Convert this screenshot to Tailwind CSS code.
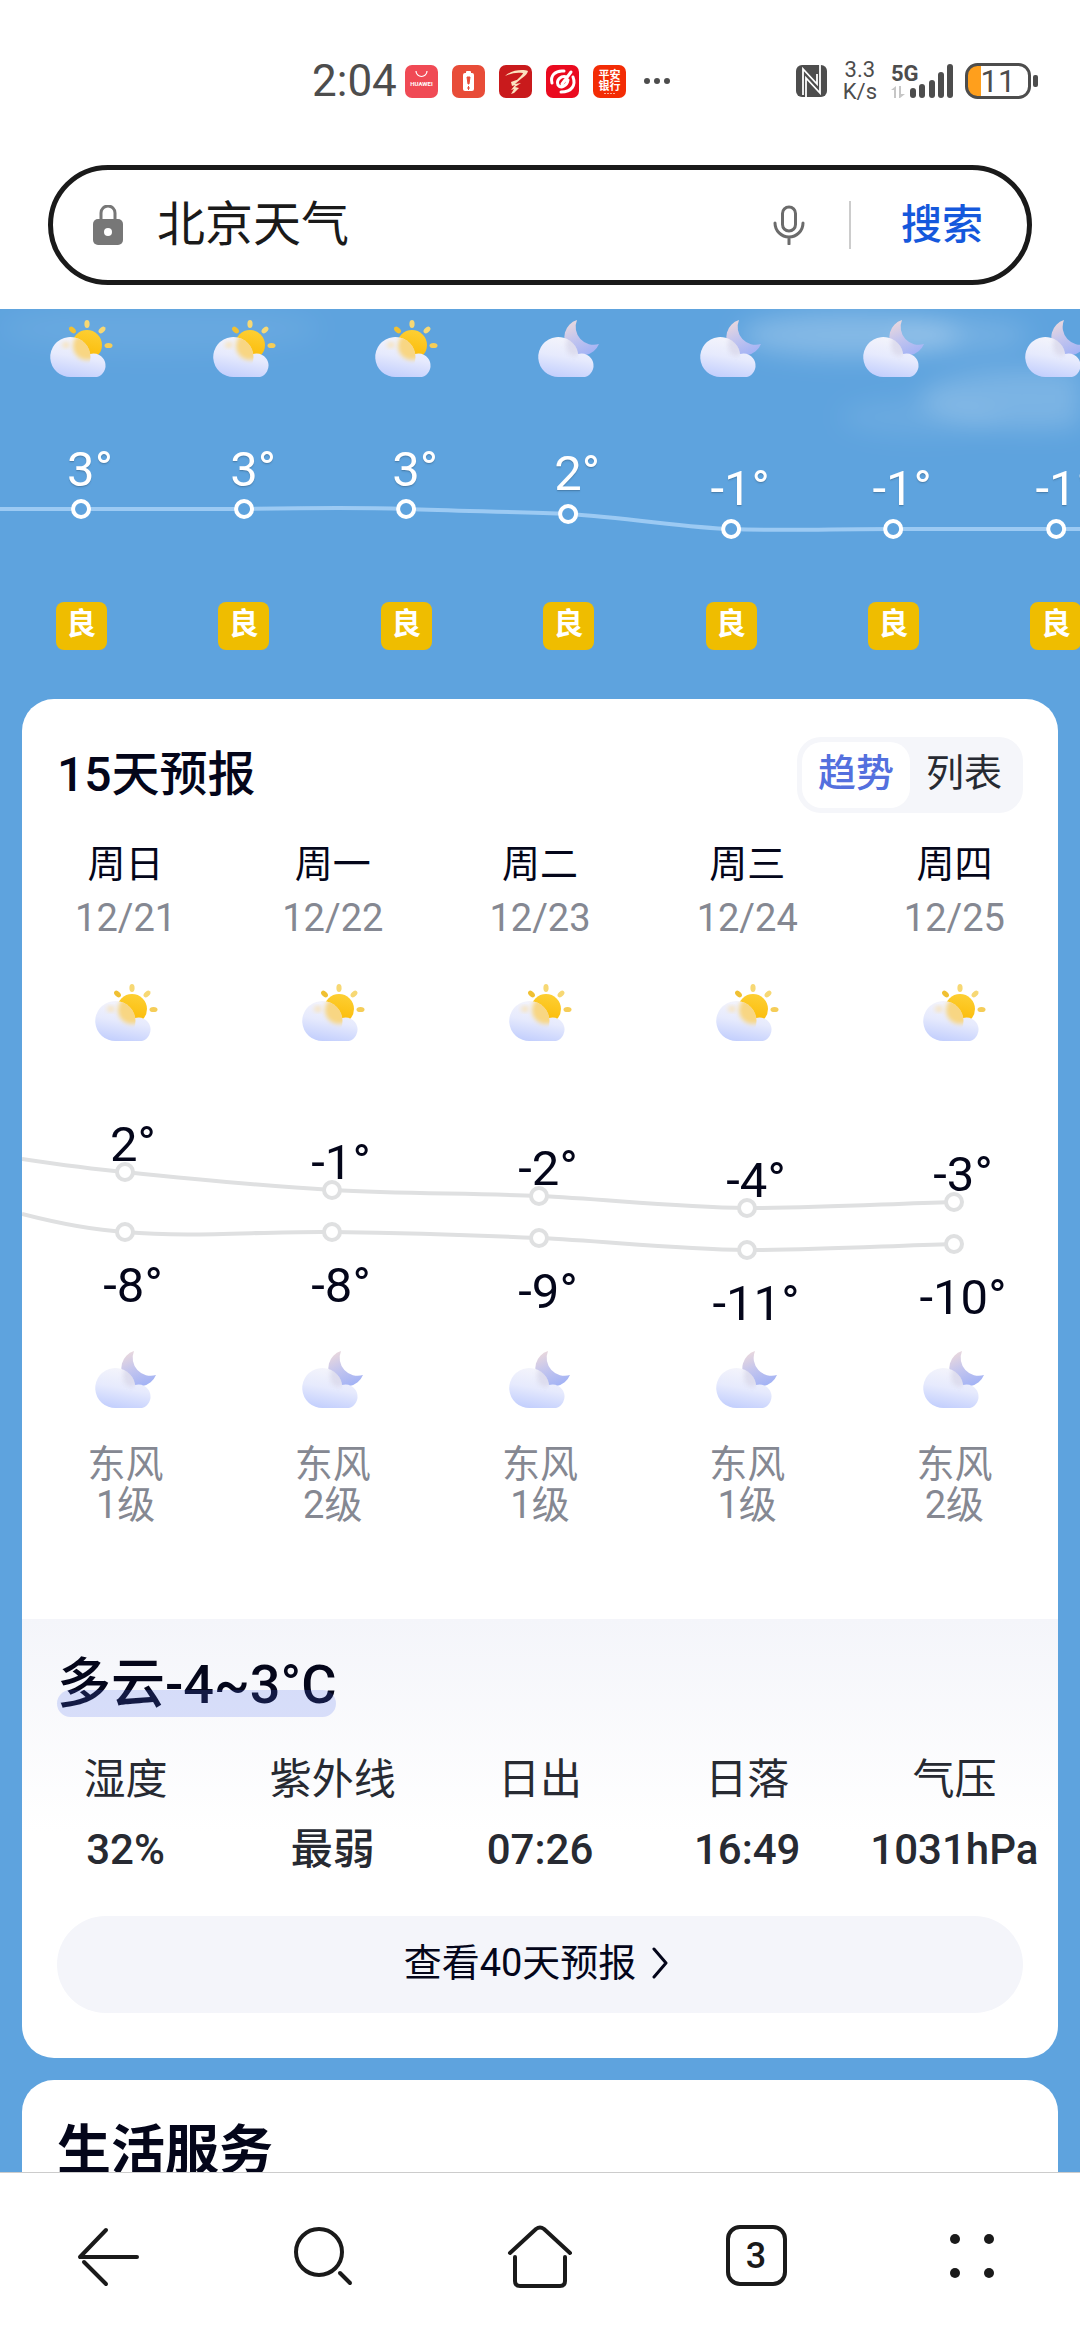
<!DOCTYPE html>
<html lang="zh-CN">
<head>
    <meta charset="UTF-8">
    <meta name="viewport" content="width=device-width, initial-scale=1.0">
    <title>北京天气</title>
    <script src="https://cdn.jsdelivr.net/npm/@tailwindcss/browser@4"></script>
</head>
<body class="flex h-screen flex-col overflow-hidden bg-white text-[#04061a] [font-family:Roboto,'Noto_Sans_CJK_SC',sans-serif]">

    <!-- Shared weather icons -->
    <svg class="absolute h-0 w-0" aria-hidden="true">
        <defs>
            <linearGradient id="cloudFill" x1="0.6" y1="0" x2="0.35" y2="1">
                <stop offset="0" stop-color="#f5f5fb"/>
                <stop offset="0.5" stop-color="#e6eafd"/>
                <stop offset="1" stop-color="#c3cffd"/>
            </linearGradient>
            <linearGradient id="sunFill" x1="0.6" y1="0" x2="0.4" y2="1">
                <stop offset="0" stop-color="#fdcf33"/>
                <stop offset="1" stop-color="#fbb903"/>
            </linearGradient>
            <linearGradient id="moonFill" x1="0.2" y1="0" x2="0.6" y2="1">
                <stop offset="0" stop-color="#ecd9dc"/>
                <stop offset="0.5" stop-color="#c3c5ee"/>
                <stop offset="1" stop-color="#a3b3f5"/>
            </linearGradient>
            <filter id="soft" x="-30%" y="-30%" width="160%" height="160%"><feGaussianBlur stdDeviation="2"/></filter>
            <filter id="haze" x="-30%" y="-60%" width="160%" height="220%"><feGaussianBlur stdDeviation="12"/></filter>
            <path id="cloudShape" d="M26 64A20 20 0 1 1 45 41A12 12 0 1 1 52 64Z"/>
            <clipPath id="lobeClip"><circle cx="25.500" cy="44" r="20"/></clipPath>
        </defs>
        <symbol id="sunny" viewBox="0 0 72 72">
            <g fill="#f7d874">
                <ellipse cx="42" cy="11" rx="2.600" ry="4"/>
                <ellipse cx="57" cy="17" rx="2.600" ry="4" transform="rotate(45 57 17)"/>
                <ellipse cx="63.500" cy="32.500" rx="4" ry="2.600" fill="#f5cd58"/>
                <ellipse cx="27.500" cy="17" rx="2.600" ry="4" fill="#f0c032" transform="rotate(-45 27.500 17)"/>
            </g>
            <circle cx="42" cy="32" r="15" fill="url(#sunFill)"/>
            <use href="#cloudShape" fill="url(#cloudFill)"/>
            <g clip-path="url(#lobeClip)">
                <circle cx="42" cy="33" r="14" fill="#f8d683" filter="url(#soft)"/>
                <ellipse cx="21" cy="32" rx="4" ry="3" fill="#f7e3bd" filter="url(#soft)"/>
            </g>
        </symbol>
        <symbol id="cloudy-night" viewBox="0 0 72 72">
            <path d="M44 7A18 18 0 1 0 66 31A18 18 0 0 1 44 7Z" fill="url(#moonFill)"/>
            <use href="#cloudShape" fill="url(#cloudFill)"/>
            <g clip-path="url(#lobeClip)">
                <ellipse cx="41" cy="32" rx="8" ry="11" fill="#d9d8ea" filter="url(#soft)" opacity="0.800"/>
            </g>
        </symbol>
    </svg>

    <header class="shrink-0 bg-white">
        <!-- Status bar -->
        <div class="flex h-[162px] items-center pl-[312px] pr-[42px] text-[#4d4d4d]">
            <span class="text-[44px] leading-[48px]">2:04</span>
            <div class="ml-2 flex items-center gap-[14px]">
                <svg class="size-[33px]" viewBox="0 0 33 33">
                    <rect width="33" height="33" rx="7" fill="#f04a55"/>
                    <path d="M11 6a5 5 0 0 0 11 0" fill="none" stroke="#fff" stroke-width="1.200"/>
                    <text x="16.500" y="21" font-size="6" font-weight="700" fill="#fff" text-anchor="middle">HUAWEI</text>
                </svg>
                <svg class="size-[33px]" viewBox="0 0 33 33">
                    <rect width="33" height="33" rx="7" fill="#e84c38"/>
                    <rect x="14" y="6" width="5" height="4" rx="1" fill="#fff"/>
                    <rect x="11" y="8" width="11" height="18" rx="2" fill="#fff"/>
                    <path d="M15 12h3l-1 7h-1zM16.500 21v4M15 23h3" fill="#e84c38" stroke="#e84c38"/>
                </svg>
                <svg class="size-[33px]" viewBox="0 0 33 33">
                    <rect width="33" height="33" rx="7" fill="#c91a1c"/>
                    <path d="M6 11C12 5 24 4 29 6c-1 5-8 8-14 13 3-5 8-8 9-11-6-1-12 0-18 3zM12 17l11-4-7 6 6-1-6 4 4 1-5 5-3 1 3-5-3 1 4-5-3 1z" fill="#fbe3bf"/>
                </svg>
                <svg class="size-[33px]" viewBox="0 0 33 33">
                    <rect width="33" height="33" rx="7" fill="#ea0a1f"/>
                    <path d="M18 6C9 5 4 11 6 18M27 12c3 8-1 15-12 15M21 12c-6-2-11 3-9 8 3 4 9 1 10-5M25 7L16 19" fill="none" stroke="#fff" stroke-width="3" stroke-linecap="round"/>
                </svg>
                <svg class="size-[33px]" viewBox="0 0 33 33">
                    <rect width="33" height="33" rx="7" fill="#f32c05"/>
                    <text x="16.500" y="14" font-size="11" font-weight="700" fill="#fff" text-anchor="middle">平安</text>
                    <text x="16.500" y="25" font-size="11" font-weight="700" fill="#fff" text-anchor="middle">银行</text>
                    <path d="M11 28.500h12" stroke="#fcab95" stroke-dasharray="2 1"/>
                </svg>
            </div>
            <svg class="ml-[17px] h-2 w-7" viewBox="0 0 28 8" fill="#4d4d4d">
                <circle cx="4" cy="4" r="3"/><circle cx="14" cy="4" r="3"/><circle cx="24" cy="4" r="3"/>
            </svg>
            <div class="ml-auto flex items-center">
                <svg class="h-8 w-[31px]" viewBox="0 0 31 32">
                    <rect width="31" height="32" rx="6" fill="#4d4d4d"/>
                    <path d="M7 30V4l14 15V9M10 32V13l14 15V0" fill="none" stroke="#fff" stroke-width="1.800"/>
                </svg>
                <div class="ml-4 text-center text-[22px] leading-[22px]">3.3<br>K/s</div>
                <svg class="ml-[14px] h-[34px] w-[63px]" viewBox="0 0 63 34" fill="#4d4d4d">
                    <text x="0" y="17" font-size="22" font-weight="700">5G</text>
                    <path d="M0 26l5-4v12H3v-8zM8 22h2v8h4l-5 4H8z" fill="#c6c6c6"/>
                    <rect x="19" y="24" width="6" height="10" rx="3"/>
                    <rect x="28" y="20" width="6" height="14" rx="3"/>
                    <rect x="38" y="16" width="6" height="18" rx="3"/>
                    <rect x="47" y="8" width="6" height="26" rx="3"/>
                    <rect x="56" y="0" width="6" height="34" rx="3"/>
                </svg>
                <svg class="ml-[11px] h-9 w-[73px]" viewBox="0 0 73 36">
                    <path d="M16 2v32h-3A11 11 0 0 1 2 23V13A11 11 0 0 1 13 2z" fill="#ff9f1c"/>
                    <rect x="1.500" y="1.500" width="63" height="33" rx="11" fill="none" stroke="#4d4d4d" stroke-width="3"/>
                    <rect x="68" y="12" width="5" height="12" rx="2" fill="#4d4d4d"/>
                    <text x="33" y="29" font-size="31" fill="#4d4d4d" text-anchor="middle">11</text>
                </svg>
            </div>
        </div>

        <!-- Address / search box -->
        <form class="mx-12 mt-[3px] mb-6 flex h-[120px] items-center rounded-full border-[5px] border-[#1a1a1a] pl-10 pr-[44px]" onsubmit="return false">
            <svg class="h-10 w-[30px] shrink-0" viewBox="0 0 30 40">
                <path d="M8 16V8a7 7 0 0 1 14 0v8" fill="none" stroke="#777" stroke-width="3"/>
                <rect y="14" width="30" height="26" rx="5" fill="#777"/>
                <circle cx="15" cy="27" r="4" fill="#fff"/>
            </svg>
            <label for="query" class="sr-only">搜索内容</label>
            <input id="query" type="text" value="北京天气" class="ml-[34px] min-w-0 flex-1 text-[48px] leading-[64px] text-[#1a1a1a] outline-none">
            <button type="button" aria-label="语音输入" class="shrink-0">
                <svg class="h-10 w-8" viewBox="0 0 32 40" fill="none" stroke="#6b6b6b" stroke-width="3" stroke-linecap="round">
                    <rect x="9.500" y="2" width="13" height="24" rx="6.500"/>
                    <path d="M2 18a14 14 0 0 0 28 0M16 33v6"/>
                </svg>
            </button>
            <span class="ml-[44px] mr-[50px] h-12 w-[2px] shrink-0 bg-[#ccc]"></span>
            <button type="submit" class="shrink-0 text-[41px] leading-[56px] font-medium text-[#1558dc]">搜索</button>
        </form>
    </header>

    <main class="min-h-0 flex-1 overflow-hidden bg-[#5ea3de]">
        <!-- Hourly forecast -->
        <section class="relative overflow-hidden pt-1" aria-label="逐小时预报">
            <svg class="absolute inset-x-0 top-0 h-[160px] w-full" viewBox="0 0 1080 160" preserveAspectRatio="none" fill="#fff" filter="url(#haze)">
                <ellipse cx="850" cy="26" rx="110" ry="22" opacity="0.240"/>
                <ellipse cx="960" cy="26" rx="70" ry="16" opacity="0.140"/>
                <ellipse cx="1030" cy="90" rx="110" ry="30" opacity="0.180"/>
                <ellipse cx="920" cy="108" rx="80" ry="18" opacity="0.080"/>
                <ellipse cx="160" cy="20" rx="160" ry="24" opacity="0.060"/>
            </svg>
            <div class="relative w-[105.3%]">
                <div class="grid grid-cols-7 justify-items-center">
                    <svg class="size-[72px]"><use href="#sunny"/></svg>
                    <svg class="size-[72px]"><use href="#sunny"/></svg>
                    <svg class="size-[72px]"><use href="#sunny"/></svg>
                    <svg class="size-[72px]"><use href="#cloudy-night"/></svg>
                    <svg class="size-[72px]"><use href="#cloudy-night"/></svg>
                    <svg class="size-[72px]"><use href="#cloudy-night"/></svg>
                    <svg class="size-[72px]"><use href="#cloudy-night"/></svg>
                </div>

                <svg class="mt-[15px] block h-auto w-full text-[49px] text-shadow-sm" viewBox="0 0 1137 202" fill="#fff" text-anchor="middle">
                    <path d="M0 109H244C300 108 350 107 406 109S520 112 568 114C630 118 690 128 731 129C780 131 830 129 893 129H1137" fill="none" stroke="#9ccaf3" stroke-width="4"/>
                    <g fill="#5ea3de" stroke="#fff" stroke-width="4">
                        <circle cx="81" cy="109" r="8"/>
                        <circle cx="244" cy="109" r="8"/>
                        <circle cx="406" cy="109" r="8"/>
                        <circle cx="568" cy="114" r="8"/>
                        <circle cx="731" cy="129" r="8"/>
                        <circle cx="893" cy="129" r="8"/>
                        <circle cx="1056" cy="129" r="8"/>
                    </g>
                    <text x="90" y="86">3°</text>
                    <text x="253" y="86">3°</text>
                    <text x="415" y="86">3°</text>
                    <text x="577" y="90">2°</text>
                    <text x="740" y="105">-1°</text>
                    <text x="902" y="105">-1°</text>
                    <text x="1065" y="105">-1°</text>
                </svg>

                <div class="grid grid-cols-7 justify-items-center text-[30px] leading-[44px] font-bold text-white">
                    <span class="h-12 w-[51px] rounded-lg bg-[#efbd00] text-center">良</span>
                    <span class="h-12 w-[51px] rounded-lg bg-[#efbd00] text-center">良</span>
                    <span class="h-12 w-[51px] rounded-lg bg-[#efbd00] text-center">良</span>
                    <span class="h-12 w-[51px] rounded-lg bg-[#efbd00] text-center">良</span>
                    <span class="h-12 w-[51px] rounded-lg bg-[#efbd00] text-center">良</span>
                    <span class="h-12 w-[51px] rounded-lg bg-[#efbd00] text-center">良</span>
                    <span class="h-12 w-[51px] rounded-lg bg-[#efbd00] text-center">良</span>
                </div>
            </div>
        </section>

        <!-- 15 day forecast -->
        <section class="mx-[22px] mt-[49px] overflow-hidden rounded-[32px] bg-white">
            <div class="flex items-center justify-between px-[35px] pt-[38px]">
                <h2 class="text-[48px] leading-[64px] font-medium">15天预报</h2>
                <div class="flex h-[76px] items-center rounded-[24px] bg-[#f5f6fa] p-[5px] text-[38px] leading-[56px]">
                    <button type="button" class="h-full w-[108px] rounded-[20px] bg-white pb-1 font-medium text-[#5470de]">趋势</button>
                    <button type="button" class="h-full w-[108px] pb-1 text-[#272a32]">列表</button>
                </div>
            </div>

            <ul class="mt-6 grid grid-cols-5 text-center text-[38px] leading-[54px]">
                <li>周日<br><span class="text-[#858892]">12/21</span></li>
                <li>周一<br><span class="text-[#858892]">12/22</span></li>
                <li>周二<br><span class="text-[#858892]">12/23</span></li>
                <li>周三<br><span class="text-[#858892]">12/24</span></li>
                <li>周四<br><span class="text-[#858892]">12/25</span></li>
            </ul>
            <div class="mt-8 grid grid-cols-5 justify-items-center">
                <svg class="size-[72px]"><use href="#sunny"/></svg>
                <svg class="size-[72px]"><use href="#sunny"/></svg>
                <svg class="size-[72px]"><use href="#sunny"/></svg>
                <svg class="size-[72px]"><use href="#sunny"/></svg>
                <svg class="size-[72px]"><use href="#sunny"/></svg>
            </div>

            <svg class="block h-auto w-full text-[49px]" viewBox="0 0 1036 295" fill="#04061a" text-anchor="middle">
                <g fill="none" stroke="#dfe0e1" stroke-width="4">
                    <path d="M0 110C40 116 70 120 103 123C170 130 240 137 310 141C380 145 450 144 517 147S650 158 725 159C800 159 860 155 932 153"/>
                    <path d="M0 165C35 174 70 181 103 183C170 189 240 182 310 183S450 186 517 189S650 200 725 201C800 201 860 197 932 195"/>
                </g>
                <g fill="#fff" stroke="#dfe0e1" stroke-width="4">
                    <circle cx="103" cy="123" r="8"/>
                    <circle cx="310" cy="141" r="8"/>
                    <circle cx="517" cy="147" r="8"/>
                    <circle cx="725" cy="159" r="8"/>
                    <circle cx="932" cy="153" r="8"/>
                    <circle cx="103" cy="183" r="8"/>
                    <circle cx="310" cy="183" r="8"/>
                    <circle cx="517" cy="189" r="8"/>
                    <circle cx="725" cy="201" r="8"/>
                    <circle cx="932" cy="195" r="8"/>
                </g>
                <text x="111" y="112">2°</text>
                <text x="319" y="130">-1°</text>
                <text x="526" y="136">-2°</text>
                <text x="734" y="148">-4°</text>
                <text x="941" y="142">-3°</text>
                <text x="111" y="253">-8°</text>
                <text x="319" y="253">-8°</text>
                <text x="526" y="259">-9°</text>
                <text x="734" y="271">-11°</text>
                <text x="941" y="265">-10°</text>
            </svg>

            <div class="grid grid-cols-5 justify-items-center">
                <svg class="size-[72px]"><use href="#cloudy-night"/></svg>
                <svg class="size-[72px]"><use href="#cloudy-night"/></svg>
                <svg class="size-[72px]"><use href="#cloudy-night"/></svg>
                <svg class="size-[72px]"><use href="#cloudy-night"/></svg>
                <svg class="size-[72px]"><use href="#cloudy-night"/></svg>
            </div>
            <ul class="mt-7 grid grid-cols-5 text-center text-[38px] leading-[41px] text-[#858892]">
                <li>东风<br>1级</li>
                <li>东风<br>2级</li>
                <li>东风<br>1级</li>
                <li>东风<br>1级</li>
                <li>东风<br>2级</li>
            </ul>

            <!-- Details of the selected day -->
            <div class="mt-[93px] bg-linear-to-b from-[#f4f5fa] to-white to-80% pt-[34px]">
                <h3 class="relative ml-[35px] w-fit text-[54px] leading-[64px] font-medium">
                    多云-4~3°C
                    <span class="absolute inset-x-0 bottom-0 h-[27px] rounded-full bg-[#4e6ef2]/20"></span>
                </h3>
                <dl class="mt-7 grid grid-cols-5 text-center text-[42px] leading-[70px] text-[#272a32]">
                    <div><dt>湿度</dt><dd class="font-medium">32%</dd></div>
                    <div><dt>紫外线</dt><dd class="font-medium">最弱</dd></div>
                    <div><dt>日出</dt><dd class="font-medium">07:26</dd></div>
                    <div><dt>日落</dt><dd class="font-medium">16:49</dd></div>
                    <div><dt>气压</dt><dd class="font-medium">1031hPa</dd></div>
                </dl>
            </div>
            <a href="#" class="mx-[35px] mt-[31px] mb-[45px] flex h-[97px] items-center justify-center gap-4 rounded-full bg-[#f4f5fa] pr-2 pb-1 text-[38px] leading-[54px]">
                查看40天预报
                <svg class="h-8 w-4" viewBox="0 0 16 32" fill="none" stroke="#04061a" stroke-width="3" stroke-linecap="round" stroke-linejoin="round">
                    <path d="M2 2l12 14L2 30"/>
                </svg>
            </a>
        </section>

        <!-- Life services -->
        <section class="mx-[22px] mt-[22px] rounded-[32px] bg-white px-[35px] pt-10 pb-20">
            <h2 class="text-[54px] leading-[64px] font-bold">生活服务</h2>
        </section>
    </main>

    <!-- Browser toolbar -->
    <nav class="grid h-[168px] shrink-0 grid-cols-5 items-center justify-items-center border-t border-[#ccc] bg-white pb-[2px] text-[#1a1a1a]">
        <button type="button" aria-label="后退">
            <svg class="size-[72px]" viewBox="0 0 72 72" fill="none" stroke="currentColor" stroke-width="4" stroke-linecap="round" stroke-linejoin="round">
                <path d="M34 10L8 37h57M12 42l22 22"/>
            </svg>
        </button>
        <button type="button" aria-label="搜索">
            <svg class="size-[72px]" viewBox="0 0 72 72" fill="none" stroke="currentColor" stroke-width="4" stroke-linecap="round">
                <circle cx="31" cy="32" r="23"/>
                <path d="M52 53l10 10"/>
            </svg>
        </button>
        <button type="button" aria-label="主页">
            <svg class="size-[72px]" viewBox="0 0 72 72" fill="none" stroke="currentColor" stroke-width="4" stroke-linecap="round" stroke-linejoin="round">
                <path d="M6 33L32 9q4-3 8 0L66 33M11 37v24q0 5 5 5h40q5 0 5-5V37"/>
            </svg>
        </button>
        <button type="button" aria-label="标签页" class="size-[61px] rounded-[14px] border-4 border-[#1a1a1a] text-[36px] leading-[52px] font-medium">3</button>
        <button type="button" aria-label="菜单">
            <svg class="size-[72px]" viewBox="0 0 72 72" fill="currentColor">
                <circle cx="19" cy="19" r="5"/><circle cx="53" cy="19" r="5"/>
                <circle cx="19" cy="53" r="5"/><circle cx="53" cy="53" r="5"/>
            </svg>
        </button>
    </nav>
</body>
</html>
